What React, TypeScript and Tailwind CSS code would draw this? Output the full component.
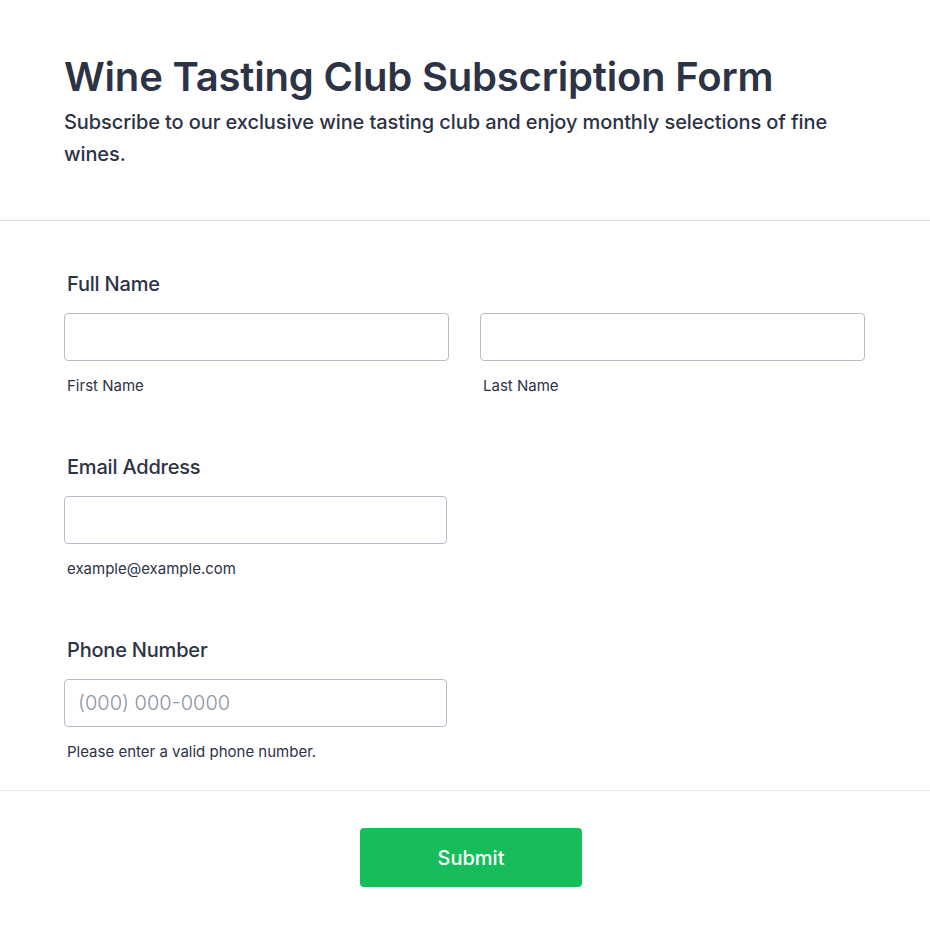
export default function App() {
  const font = { fontFamily: "Inter, 'Noto Sans', sans-serif" };
  return (
    <div className="min-h-[937px] w-[930px] bg-white text-[#2c3345]" style={font}>
      <div className="border-b border-[#d8dae4] px-16 pt-[53px] pb-[50px]">
        <h1 className="text-[40px] leading-[48px] font-semibold tracking-[-0.2px]">
          Wine Tasting Club Subscription Form
        </h1>
        <p className="mt-[5px] text-[20px] leading-[32px] font-medium tracking-[-0.1px]">
          Subscribe to our exclusive wine tasting club and enjoy monthly selections of fine wines.
        </p>
      </div>

      <div className="border-b border-[#e5e7ef] px-16 pt-[51px] pb-[28px]">
        <div>
          <label className="block px-[3px] text-[20px] leading-[24px] font-medium tracking-[-0.2px]">Full Name</label>
          <div className="mt-[17px] flex gap-[31px] w-[801px]">
            <div className="flex-1">
              <input className="block h-[48px] w-full rounded-[4px] border border-[#b8bdc9] bg-white px-3 outline-none" />
              <div className="mt-[15px] px-[3px] text-[15px] leading-[20px]">First Name</div>
            </div>
            <div className="flex-1">
              <input className="block h-[48px] w-full rounded-[4px] border border-[#b8bdc9] bg-white px-3 outline-none" />
              <div className="mt-[15px] px-[3px] text-[15px] leading-[20px]">Last Name</div>
            </div>
          </div>
        </div>

        <div className="mt-[59px]">
          <label className="block px-[3px] text-[20px] leading-[24px] font-medium tracking-[-0.2px]">Email Address</label>
          <input className="mt-[17px] block h-[48px] w-[383px] rounded-[4px] border border-[#b8bdc9] bg-white px-3 outline-none" />
          <div className="mt-[15px] px-[3px] text-[15px] leading-[20px]">example@example.com</div>
        </div>

        <div className="mt-[59px]">
          <label className="block px-[3px] text-[20px] leading-[24px] font-medium tracking-[-0.2px]">Phone Number</label>
          <input
            placeholder="(000) 000-0000"
            className="mt-[17px] block h-[48px] w-[383px] rounded-[4px] border border-[#b8bdc9] bg-white px-[13px] text-[20px] font-light outline-none placeholder:text-[#8d95a5]"
          />
          <div className="mt-[15px] px-[3px] text-[15px] leading-[20px]">Please enter a valid phone number.</div>
        </div>
      </div>

      <div className="flex justify-center pt-[37px] pl-[12px]">
        <button className="h-[59px] w-[222px] rounded-[4px] bg-[#18bd5b] text-[20px] font-medium text-white">
          Submit
        </button>
      </div>
    </div>
  );
}
